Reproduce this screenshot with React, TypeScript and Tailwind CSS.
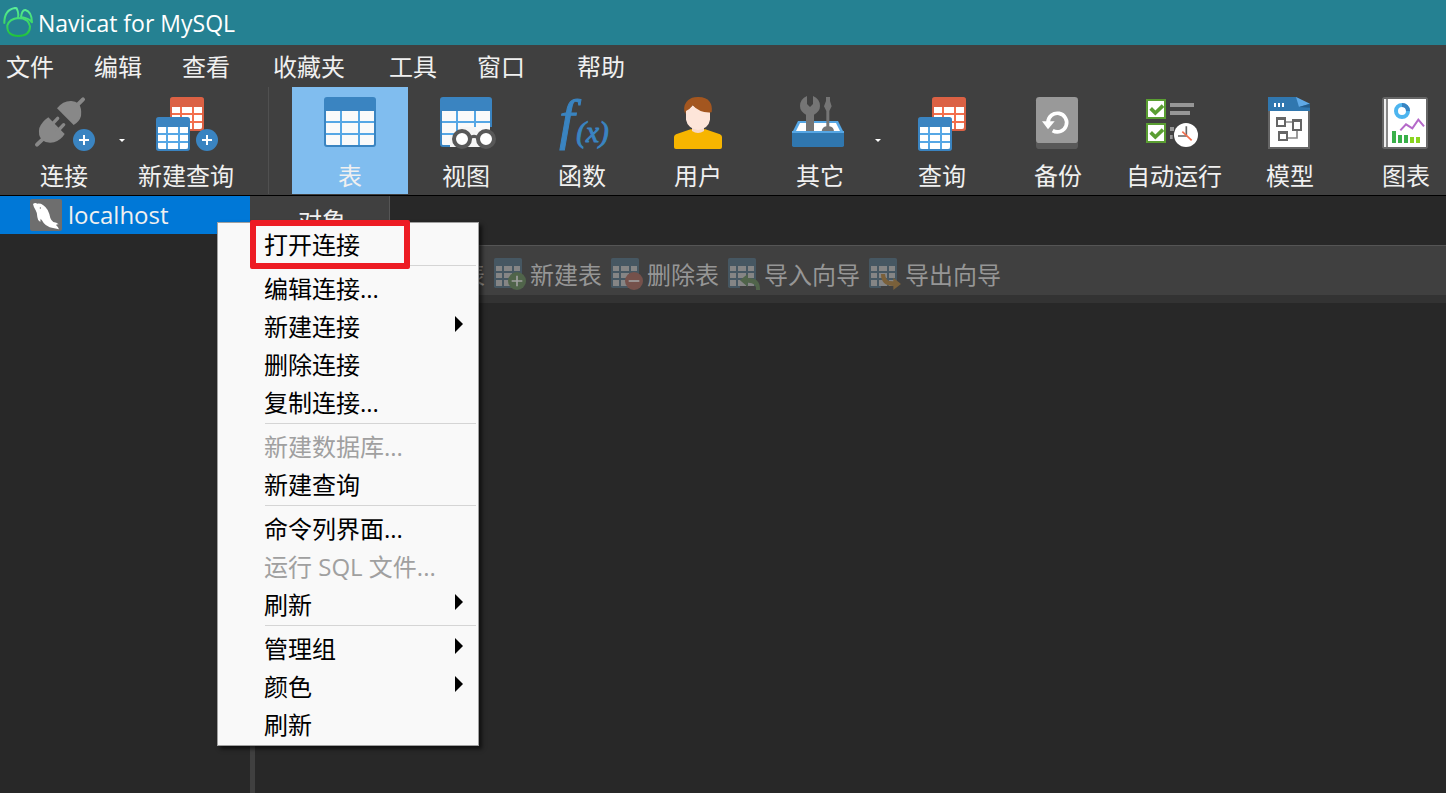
import type { ReactNode } from "react";

type Tool = {
  label: string;
  icon: ReactNode;
  active?: boolean;
  dropdown?: boolean;
};

type MenuEntry = {
  label: string;
  disabled?: boolean;
  submenu?: boolean;
  marked?: boolean;
};

const menus = [
  { label: "文件", width: "w-22" },
  { label: "编辑", width: "w-22" },
  { label: "查看", width: "w-[91px]" },
  { label: "收藏夹", width: "w-29" },
  { label: "工具", width: "w-22" },
  { label: "窗口", width: "w-25" },
  { label: "帮助", width: "w-22" },
];

function ToolIcon({ viewBox, children }: { viewBox: string; children: ReactNode }) {
  return (
    <svg viewBox={viewBox} className="h-15 w-18 shrink-0 overflow-visible" aria-hidden="true">
      {children}
    </svg>
  );
}

/* Two stacked tables, shared by "new query" and "query" */
function StackedTables() {
  return (
    <>
      <rect x="510" y="36" width="102" height="102" rx="8" fill="#db6144" />
      <rect x="516" y="66" width="90" height="66" fill="#f36f4d" />
      <path
        d="M516 66h24v18h-24zM546 66h30v18h-30zM582 66h24v18h-24zM516 90h24v18h-24zM546 90h30v18h-30zM582 90h24v18h-24zM546 114h30v18h-30zM582 114h24v12q0 6-6 6h-18z"
        fill="#fff"
      />
      <rect x="468" y="96" width="102" height="102" rx="8" fill="#3a84c1" />
      <rect x="474" y="126" width="90" height="66" fill="#56a7e5" />
      <path
        d="M474 126h24v18h-24zM504 126h30v18h-30zM540 126h24v18h-24zM474 150h24v18h-24zM504 150h30v18h-30zM540 150h24v18h-24zM474 174h24v18h-18q-6 0-6-6zM504 174h30v18h-30zM540 174h24v12q0 6-6 6h-18z"
        fill="#fff"
      />
    </>
  );
}

function PlusBadge({ cx, cy }: { cx: number; cy: number }) {
  return (
    <>
      <circle cx={cx} cy={cy} r="33" fill="#3a84c1" />
      <path d={`M${cx - 15} ${cy}h30M${cx} ${cy - 15}v30`} stroke="#fff" strokeWidth="6" />
    </>
  );
}

function LargeTable() {
  return (
    <>
      <rect x="117" y="36" width="156" height="150" rx="9" fill="#3a84c1" />
      <rect x="123" y="78" width="144" height="102" fill="#56a7e5" />
      <path
        d="M123 78h42v30h-42zM171 78h48v30h-48zM225 78h42v30h-42zM123 114h42v30h-42zM171 114h48v30h-48zM225 114h42v30h-42zM123 150h42v30h-38q-4 0-4-4zM171 150h48v30h-48zM225 150h42v26q0 4-4 4h-38z"
        fill="#fafafa"
      />
    </>
  );
}

const leftTools: Tool[] = [
  {
    label: "连接",
    dropdown: true,
    icon: (
      <ToolIcon viewBox="84 30 216 180">
        <g fill="#888">
          <path d="M111 179 130 161M234 58l15-15" stroke="#888" strokeWidth="12" strokeLinecap="round" />
          <path d="M221 120 171 70q18-23 43-22 12 1 22 8 10 13 7 37-4 16-22 27Z" />
          <path d="M145 97 194 147q-12 19-32 25-20 5-36-7-13-14-8-36 7-18 27-32Z" />
          <path d="m156 118 17-18M173 138l18-19" stroke="#888" strokeWidth="10" strokeLinecap="round" />
        </g>
        <PlusBadge cx={252} cy={165} />
      </ToolIcon>
    ),
  },
  {
    label: "新建查询",
    icon: (
      <ToolIcon viewBox="450 30 216 180">
        <StackedTables />
        <PlusBadge cx={621} cy={165} />
      </ToolIcon>
    ),
  },
];

const objectTools: Tool[] = [
  {
    label: "表",
    active: true,
    icon: (
      <ToolIcon viewBox="87 30 216 180">
        <LargeTable />
      </ToolIcon>
    ),
  },
  {
    label: "视图",
    icon: (
      <ToolIcon viewBox="87 30 216 180">
        <LargeTable />
        <path d="M147 150h30v-24h48v12h48v48H147Z" fill="#f5f5f5" />
        <path d="M267 126h7v62h-7z" fill="#404040" />
        <path d="M207 158q12-8 24 0" fill="none" stroke="#585858" strokeWidth="10" />
        <circle cx="183" cy="162" r="24" fill="#fff" stroke="#585858" strokeWidth="12" />
        <circle cx="255" cy="162" r="24" fill="#fff" stroke="#585858" strokeWidth="12" />
      </ToolIcon>
    ),
  },
  {
    label: "函数",
    icon: (
      <ToolIcon viewBox="48 30 216 180">
        <g fill="#3a84c1" stroke="#3a84c1" strokeWidth="3" fontFamily="Liberation Serif, serif" fontStyle="italic">
          <text x="88" y="158" fontSize="166">
            f
          </text>
          <text x="139" y="172" fontSize="88">
            (x)
          </text>
        </g>
      </ToolIcon>
    ),
  },
  {
    label: "用户",
    icon: (
      <ToolIcon viewBox="396 30 216 180">
        <path
          d="M432 186v-30q0-5 6-8l44-15h44l44 15q6 3 6 8v30q0 6-6 6H438q-6 0-6-6Z"
          fill="#f7b500"
        />
        <path d="M486 124h36v14q-18 12-36 0Z" fill="#f6d7c7" />
        <path d="M468 70q14 0 20-10 22 18 52 22v22q-4 26-36 31-31-5-36-31Z" fill="#fde5d9" />
        <path
          d="M463 78q-3-20 11-32 11-11 32-10 22 0 33 14 9 12 6 32-36 3-57-21-8 12-20 17-2 8-2 10Z"
          fill="#a3561f"
        />
      </ToolIcon>
    ),
  },
  {
    label: "其它",
    dropdown: true,
    icon: (
      <ToolIcon viewBox="69 30 216 180">
        <path d="M111 108h120l18 36H93Z" fill="#56a7e5" />
        <path d="M117 114h108l12 24H105Z" fill="#fff" />
        <path
          d="M138 33v24l9 9 9-9V33q21 9 21 30 0 16-18 26v50h-24V89q-18-10-18-26 0-21 21-30Z"
          fill="#757575"
        />
        <path d="M195 36h12v12l5 16-7 14v46q13 2 14 15h-37q2-13 14-15V78l-7-14 6-16Z" fill="#757575" />
        <path d="M93 138h156v43q0 5-5 5H98q-5 0-5-5Z" fill="#3077af" />
        <path d="M93 138h156v6H93Z" fill="#56a7e5" />
      </ToolIcon>
    ),
  },
  {
    label: "查询",
    icon: (
      <ToolIcon viewBox="432 30 216 180">
        <StackedTables />
      </ToolIcon>
    ),
  },
  {
    label: "备份",
    icon: (
      <ToolIcon viewBox="33 30 216 180">
        <rect x="75" y="54" width="126" height="138" rx="10" fill="#595959" />
        <rect x="75" y="36" width="126" height="138" rx="10" fill="#999" />
        <path d="M111 112a28 28 0 1 1 14 25" fill="none" stroke="#fff" strokeWidth="11" />
        <path d="M93 109h38l-20 24Z" fill="#fff" />
      </ToolIcon>
    ),
  },
  {
    label: "自动运行",
    icon: (
      <ToolIcon viewBox="381 30 216 180">
        <g fill="#fff" stroke="#5a9e32" strokeWidth="6">
          <rect x="408" y="45" width="54" height="54" />
          <rect x="408" y="117" width="54" height="54" />
        </g>
        <path d="m419 70 14 14 23-22M419 142l14 14 23-22" fill="none" stroke="#5a9e32" strokeWidth="11" />
        <path d="M477 54h72v12h-72zM477 78h60v12h-60zM477 126h12v12h-12zM477 150h8v12h-8z" fill="#969696" />
        <circle cx="525" cy="150" r="38" fill="#404040" />
        <circle cx="525" cy="150" r="36" fill="#fff" />
        <path d="M526 124v27M501 153h27" stroke="#666" strokeWidth="5" />
        <path d="m514 140 28 26" stroke="#f36f4d" strokeWidth="5" />
      </ToolIcon>
    ),
  },
  {
    label: "模型",
    icon: (
      <ToolIcon viewBox="69 30 216 180">
        <path d="M111 66h126v126H111Z" fill="#666" />
        <path d="M117 78h114v108H117Z" fill="#fff" />
        <path d="M111 36h84l42 24v18H111Z" fill="#3077af" />
        <path d="m195 36 42 20-33 10Z" fill="#5fa9e6" />
        <path d="M204 66l33-10v12Z" fill="#245c8a" />
        <path d="M129 54h6v12h-6zM141 54h6v12h-6zM153 54h6v12h-6z" fill="#fff" />
        <path d="M165 111h18M198 138v21h-27" fill="none" stroke="#888" strokeWidth="5" />
        <g fill="none" stroke="#666" strokeWidth="6">
          <rect x="138" y="99" width="24" height="24" />
          <rect x="186" y="105" width="24" height="30" />
          <rect x="144" y="141" width="24" height="24" />
        </g>
        <path d="M138 99h24v6h-24zM186 105h24v6h-24zM144 141h24v6h-24z" fill="#666" />
      </ToolIcon>
    ),
  },
  {
    label: "图表",
    icon: (
      <ToolIcon viewBox="417 30 216 180">
        <rect x="453" y="36" width="138" height="156" rx="8" fill="#666" />
        <path d="M459 42h6v144h-6z" fill="#eee" />
        <path d="M465 42h6v144h-6z" fill="#888" />
        <path d="M471 42h114v144H471Z" fill="#fff" />
        <circle cx="513" cy="78" r="18" fill="none" stroke="#4db5ef" strokeWidth="12" />
        <path d="M513 60a18 18 0 0 1 18 18" fill="none" stroke="#3a84c1" strokeWidth="12" />
        <path d="m508 136 17-18 19 12 18-26 17 20" fill="none" stroke="#b569c9" strokeWidth="6" />
        <path d="M483 138h12v36h-12zM501 150h12v24h-12zM519 150h12v24h-12z" fill="#39b04a" />
        <path d="M537 156h12v18h-12zM555 156h12v18h-12z" fill="#8ad41f" />
      </ToolIcon>
    ),
  },
];

function SmallTable({ children }: { children?: ReactNode }) {
  return (
    <svg viewBox="0 0 96 96" className="size-8 shrink-0" aria-hidden="true">
      <rect width="84" height="90" rx="5" fill="#465762" />
      <path
        d="M6 24h18v15H6zM30 24h24v15H30zM60 24h18v15H60zM6 45h18v15H6zM30 45h24v15H30zM60 45h18v15H60zM6 66h18v18H6zM30 66h24v18H30zM60 66h18v18H60z"
        fill="#858585"
      />
      {children}
    </svg>
  );
}

const tableActions: Tool[] = [
  { label: "打开表", icon: <SmallTable /> },
  { label: "设计表", icon: <SmallTable /> },
  {
    label: "新建表",
    icon: (
      <SmallTable>
        <circle cx="69" cy="69" r="27" fill="#50644a" />
        <path d="M53 69h32M69 53v32" stroke="#a0a0a0" strokeWidth="5" />
      </SmallTable>
    ),
  },
  {
    label: "删除表",
    icon: (
      <SmallTable>
        <circle cx="69" cy="69" r="27" fill="#75514b" />
        <path d="M53 69h32" stroke="#a0a0a0" strokeWidth="5" />
      </SmallTable>
    ),
  },
  {
    label: "导入向导",
    icon: (
      <SmallTable>
        <path d="M36 84h48v12H36z" fill="#404040" />
        <path d="m36 67 23-19v12q38-2 37 36H84q1-23-25-22v12Z" fill="#50644a" />
      </SmallTable>
    ),
  },
  {
    label: "导出向导",
    icon: (
      <SmallTable>
        <path d="M36 84h48v12H36z" fill="#404040" />
        <path d="M36 48h12q1 23 25 22V59l23 19-23 18V84q-37 0-37-36Z" fill="#7a603a" />
      </SmallTable>
    ),
  },
];

const contextMenu: MenuEntry[][] = [
  [{ label: "打开连接", marked: true }],
  [
    { label: "编辑连接..." },
    { label: "新建连接", submenu: true },
    { label: "删除连接" },
    { label: "复制连接..." },
  ],
  [{ label: "新建数据库...", disabled: true }, { label: "新建查询" }],
  [
    { label: "命令列界面..." },
    { label: "运行 SQL 文件...", disabled: true },
    { label: "刷新", submenu: true },
  ],
  [{ label: "管理组", submenu: true }, { label: "颜色", submenu: true }, { label: "刷新" }],
];

function ToolButton({ tool }: { tool: Tool }) {
  return (
    <button
      type="button"
      className={`relative flex h-[107px] shrink-0 flex-col items-center gap-[5px] pt-2 ${
        tool.dropdown ? "w-32" : "w-29"
      } ${tool.active ? "bg-[#80bdef]" : ""}`}
    >
      {tool.icon}
      <span className="leading-8 whitespace-nowrap">{tool.label}</span>
      {tool.dropdown && (
        <svg viewBox="0 0 6 3" className="absolute top-13 right-[3px] h-[3px] w-1.5" aria-hidden="true">
          <path d="M0 0h6L3 3Z" fill="#fff" />
        </svg>
      )}
    </button>
  );
}

function ContextMenu() {
  return (
    <div
      role="menu"
      className="absolute top-[26px] left-[217px] z-10 w-[262px] border border-[#a0a0a0] bg-[#f9f9f9] pt-[3px] pb-px text-black shadow-[3px_3px_4px_rgba(0,0,0,0.6)]"
    >
      {contextMenu.map((group, i) => (
        <div key={i}>
          {i > 0 && <hr className="mt-px mr-0.5 mb-1 ml-[47px] border-[#d5d5d5]" />}
          {group.map((entry) => (
            <button
              key={entry.label}
              type="button"
              role="menuitem"
              disabled={entry.disabled}
              className="relative flex h-[38px] w-full items-center justify-between pr-[15px] pl-[46px] text-left disabled:text-[#a0a0a0]"
            >
              <span>{entry.label}</span>
              {entry.submenu && (
                <svg viewBox="0 0 8 16" className="mb-1.5 h-4 w-2" aria-hidden="true">
                  <path d="M0 0v16l8-8Z" fill="#000" />
                </svg>
              )}
              {entry.marked && (
                <span className="absolute -top-1.5 left-8 h-[49px] w-40 rounded-xs border-6 border-[#ed1c24]" />
              )}
            </button>
          ))}
        </div>
      ))}
    </div>
  );
}

export default function App() {
  return (
    <div className="flex min-h-screen flex-col overflow-hidden bg-[#282828] font-['Open_Sans','Noto_Sans_CJK_SC',sans-serif] text-2xl leading-8 font-normal text-[#f0f0f0]">
      {/* Title bar */}
      <header className="flex h-[45px] items-center gap-[3px] bg-[#258192] pl-[3px] text-white">
        <svg viewBox="0 0 96 96" className="size-8 shrink-0" aria-hidden="true">
          <defs>
            <linearGradient id="leaf" gradientUnits="userSpaceOnUse" x1="0" y1="0" x2="0" y2="90">
              <stop offset="0" stopColor="#5cf09a" />
              <stop offset="1" stopColor="#1fc236" />
            </linearGradient>
          </defs>
          <g fill="none" stroke="url(#leaf)" strokeWidth="6" strokeLinejoin="round" strokeLinecap="round">
            <path d="M4 48Q4 8 36 3l5 1q7 14 4 28" />
            <path d="M54 30Q57 8 67 9q19 5 20 37-8-12-33-16Z" />
            <path d="M46 33q-26 2-33 22-2 32 33 32 35 0 35-29-2-11-10-18-10-7-25-7Z" />
          </g>
        </svg>
        <h1 className="text-[23px]">Navicat for MySQL</h1>
      </header>

      <nav className="flex h-[42px] items-center bg-[#404040] pt-0.5 pl-1.5">
        {menus.map((menu) => (
          <button key={menu.label} type="button" className={`${menu.width} shrink-0 text-left`}>
            {menu.label}
          </button>
        ))}
      </nav>

      {/* Main toolbar */}
      <div className="flex h-[109px] overflow-hidden border-b border-black bg-[#404040]">
        {leftTools.map((tool) => (
          <ToolButton key={tool.label} tool={tool} />
        ))}
        <div className="flex w-12 shrink-0 justify-center">
          <div className="h-[107px] w-px bg-[#505050]" />
        </div>
        {objectTools.map((tool) => (
          <ToolButton key={tool.label} tool={tool} />
        ))}
      </div>

      <main className="relative flex flex-1">
        <aside className="w-[250px] shrink-0">
          <button type="button" className="flex h-[38px] w-full items-center gap-1.5 bg-[#0078d7] pl-[30px]">
            <svg viewBox="0 0 96 96" className="size-8 shrink-0" aria-hidden="true">
              <rect width="96" height="96" rx="6" fill="#6e6e6e" />
              <path
                d="M9 15q6-5 13-1 10-1 17 4 9 6 14 15 6 12 8 24 3 8 9 12 10 1 16 7-6-1-8 2 7 6 9 13-15-3-28-6-12-5-18-13-4-8-9-13-1 5-1 10-9-6-9-15 0-12-5-20-6-9-8-19Z"
                fill="#fff"
              />
              <circle cx="31" cy="27" r="2" fill="#6e6e6e" />
            </svg>
            <span>localhost</span>
          </button>
        </aside>
        <div className="w-[5px] shrink-0 bg-[#404040]" />
        <section className="min-w-0 flex-1">
          <div className="flex h-[49px]">
            <button type="button" className="w-[135px] border-r border-[#555] bg-[#404040]">
              对象
            </button>
          </div>
          <div className="flex h-[50px] gap-[9px] overflow-hidden border-t border-[#555] bg-[#404040] pt-3 pl-[5px]">
            {tableActions.map((action) => (
              <button
                key={action.label}
                type="button"
                disabled
                className="flex h-8 shrink-0 items-center gap-1 text-[#969696]"
              >
                {action.icon}
                <span className="pt-0.5">{action.label}</span>
              </button>
            ))}
          </div>
          <div className="h-2 bg-[#333]" />
        </section>
        <ContextMenu />
      </main>
    </div>
  );
}
